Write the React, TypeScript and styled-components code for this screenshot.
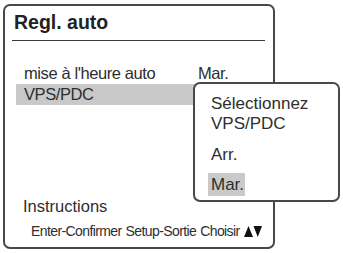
import { FC } from 'react';
import styled, { createGlobalStyle } from 'styled-components';

const GlobalStyle = createGlobalStyle`
    body {
        margin: 0;
        background: #fff;
        font-family: "Liberation Sans", Arial, sans-serif;
        color: #2e2e2e;
    }
`;

const Screen = styled.div`
    position: relative;
    width: 343px;
    height: 253px;
    overflow: hidden;
`;

const Panel = styled.div`
    box-sizing: border-box;
    margin: 4px 0 0 3px;
    width: 272px;
    height: 245px;
    border: 2px solid #484848;
    border-radius: 7px;
    display: flex;
    flex-direction: column;
`;

const Header = styled.div`
    box-sizing: border-box;
    height: 35px;
    margin: 0 8px 0 7px;
    padding: 4px 0 0 2px;
    border-bottom: 1px solid #3a3a3a;
    font-weight: 700;
    font-size: 19.5px;
    line-height: 24px;
    color: #222;
`;

const List = styled.div`
    margin: 22px 8px 0 11px;
    display: flex;
    flex-direction: column;
`;

const Row = styled.div<{ $active?: boolean }>`
    display: flex;
    height: 21px;
    padding-left: 8px;
    font-size: 16.5px;
    line-height: 21px;
    letter-spacing: -0.4px;
    white-space: nowrap;
    background: ${({ $active }) => ($active ? '#c9c9c9' : 'transparent')};
    .label {
        width: 174px;
    }
`;

const Footer = styled.div`
    margin-top: auto;
    padding: 0 0 8px 18px;
    display: flex;
    flex-direction: column;
    .title {
        font-size: 16.5px;
        line-height: 22px;
        margin-bottom: 6px;
    }
`;

const Keys = styled.div`
    display: flex;
    align-items: center;
    padding-left: 8px;
    font-size: 14px;
    line-height: 16px;
    letter-spacing: -0.6px;
    white-space: nowrap;
    .word {
        margin-right: 4px;
    }
`;

const Arrows = styled.svg`
    width: 18px;
    height: 11px;
    fill: #111;
`;

const Popup = styled.div`
    position: absolute;
    box-sizing: border-box;
    left: 193px;
    top: 82px;
    width: 147px;
    height: 120px;
    padding: 10px 0 0 16px;
    background: #fff;
    border: 2px solid #484848;
    border-radius: 7px;
    display: flex;
    flex-direction: column;
    font-size: 17px;
    line-height: 20px;
    .heading {
        margin-bottom: 9px;
    }
`;

const Option = styled.div<{ $selected?: boolean }>`
    align-self: flex-start;
    height: 23px;
    line-height: 23px;
    margin: 0 0 7px -3px;
    padding: 0 1px 0 3px;
    background: ${({ $selected }) => ($selected ? '#c9c9c9' : 'transparent')};
`;

const App: FC = () => {
    return (
        <Screen>
            <GlobalStyle />
            <Panel>
                <Header>Regl. auto</Header>
                <List>
                    <Row>
                        <span className="label">mise à l'heure auto</span>
                        <span>Mar.</span>
                    </Row>
                    <Row $active>
                        <span className="label">VPS/PDC</span>
                    </Row>
                </List>
                <Footer>
                    <div className="title">Instructions</div>
                    <Keys>
                        <span className="word">Enter-Confirmer</span>
                        <span className="word">Setup-Sortie</span>
                        <span className="word">Choisir</span>
                        <Arrows viewBox="0 0 18 11">
                            <polygon points="0,11 4.5,0 9,11" />
                            <polygon points="9.5,0 18,0 13.75,11" />
                        </Arrows>
                    </Keys>
                </Footer>
            </Panel>
            <Popup>
                <div className="heading">
                    Sélectionnez
                    <br />
                    VPS/PDC
                </div>
                <Option>Arr.</Option>
                <Option $selected>Mar.</Option>
            </Popup>
        </Screen>
    );
};

export default App;
